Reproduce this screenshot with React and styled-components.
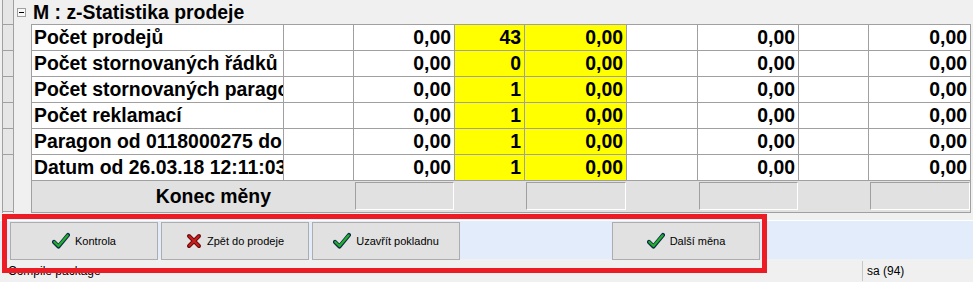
import { Fragment } from "react";
import styled, { createGlobalStyle } from "styled-components";

const GlobalStyle = createGlobalStyle`
  html, body {
    margin: 0;
    padding: 0;
    background: #f0f0f0;
    overflow: hidden;
  }
`;

const COLS = "252px 70px 101px 70px 102px 71px 101px 70px 102px";

const Shell = styled.div`
  position: relative;
  display: flex;
  flex-direction: column;
  width: 973px;
  height: 282px;
  background: #f0f0f0;
  overflow: hidden;
  font-family: "Liberation Sans", Arial, sans-serif;
  color: #000;
`;

const GridArea = styled.div`
  display: flex;
  height: 213px;
`;

const RowHeaders = styled.div`
  display: flex;
  flex-direction: column;
  width: 10px;
  margin-left: 2px;
  border-left: 1px solid #a0a0a0;
  border-right: 1px solid #a0a0a0;
`;

const HeaderCell = styled.div`
  height: ${({ $h }) => $h}px;
  box-sizing: border-box;
  background: #e6e6e6;
  border-bottom: 1px solid #a0a0a0;
`;

const Main = styled.div`
  flex: 1;
  display: flex;
  flex-direction: column;
`;

const TitleRow = styled.div`
  display: flex;
  align-items: center;
  height: 24px;
  padding-left: 3px;
  gap: 7px;
`;

const Toggle = styled.div`
  width: 9px;
  height: 9px;
  margin-top: 1px;
  box-sizing: border-box;
  border: 1px solid #a0a0a0;
  background: #f8f8f8;
  display: flex;
  align-items: center;
  justify-content: center;

  &::after {
    content: "";
    width: 5px;
    height: 1px;
    background: #000;
  }
`;

const Title = styled.div`
  font-size: 19.4px;
  font-weight: bold;
  white-space: nowrap;
`;

const Table = styled.div`
  margin-left: 17px;
  display: grid;
  grid-template-columns: ${COLS};
  width: 940px;
  box-sizing: border-box;
  border-top: 1px solid #a0a0a0;
  border-left: 1px solid #a0a0a0;
`;

const Cell = styled.div`
  height: 26px;
  box-sizing: border-box;
  border-right: 1px solid #a0a0a0;
  border-bottom: 1px solid #a0a0a0;
  background: ${({ $yellow }) => ($yellow ? "#ffff00" : "#ffffff")};
  font-size: 19.4px;
  font-weight: bold;
  line-height: 25px;
  white-space: nowrap;
  overflow: hidden;
  padding: ${({ $num }) => ($num ? "0 3px 0 0" : "0 0 0 2px")};
  text-align: ${({ $num }) => ($num ? "right" : "left")};
`;

const EndRow = styled.div`
  grid-column: 1 / -1;
  display: grid;
  grid-template-columns: ${COLS};
  height: 32px;
  box-sizing: border-box;
  background: #e1e1e1;
  border-right: 1px solid #a0a0a0;
  border-bottom: 1px solid #a0a0a0;
`;

const EndLabel = styled.div`
  font-size: 19.4px;
  font-weight: bold;
  line-height: 30px;
  text-align: right;
  padding-right: 13px;
`;

const EndBox = styled.div`
  margin: 1px 1px 2px 1px;
  box-sizing: border-box;
  border-top: 1px solid #a0a0a0;
  border-left: 1px solid #a0a0a0;
  border-bottom: 1px solid #ffffff;
  border-right: 1px solid #ffffff;
`;

const ButtonPanel = styled.div`
  display: flex;
  gap: 3px;
  margin-top: 7px;
  padding: 1px 0 0 10px;
  height: 39px;
  box-sizing: border-box;
  border-top: 1px solid #ffffff;
  background: #e2ecfa;
`;

const Button = styled.div`
  display: flex;
  align-items: center;
  justify-content: center;
  gap: 5px;
  width: 148px;
  height: 38px;
  margin-left: ${({ $push }) => $push || 0}px;
  box-sizing: border-box;
  background: #e1e1e1;
  border: 1px solid #adadad;
  font-size: 11px;
  white-space: nowrap;
`;

const StatusBar = styled.div`
  display: flex;
  align-items: center;
  margin-top: 2px;
  height: 20px;
  font-size: 12px;
  color: #000;
`;

const StatusMain = styled.div`
  flex: 1;
  padding-left: 8px;
`;

const StatusPane = styled.div`
  width: 106px;
  height: 100%;
  display: flex;
  align-items: center;
  padding-left: 4px;
  border-left: 1px solid #c8c8c8;
`;

const Highlight = styled.div`
  position: absolute;
  left: 2px;
  top: 214px;
  width: 765px;
  height: 59px;
  box-sizing: border-box;
  border: 5px solid #ed1c24;
  pointer-events: none;
`;

const CheckIcon = () => (
  <svg width="18" height="18" viewBox="0 0 18 18">
    <path d="M2 10 L6.5 14.5 L16 3" fill="none" stroke="#0d2a4a" strokeWidth="4.2" strokeLinecap="round" strokeLinejoin="round" />
    <path d="M2.3 10 L6.5 14 L15.7 3.3" fill="none" stroke="#22b02a" strokeWidth="2.2" strokeLinecap="round" strokeLinejoin="round" />
  </svg>
);

const CrossIcon = () => (
  <svg width="16" height="16" viewBox="0 0 16 16">
    <path d="M3 3 L13 13 M13 3 L3 13" fill="none" stroke="#6e0a0a" strokeWidth="4" strokeLinecap="round" />
    <path d="M3.3 3.3 L12.7 12.7 M12.7 3.3 L3.3 12.7" fill="none" stroke="#c81e1e" strokeWidth="2" strokeLinecap="round" />
  </svg>
);

const rows = [
  { label: "Počet prodejů", count: "43" },
  { label: "Počet stornovaných řádků", count: "0" },
  { label: "Počet stornovaných paragonů", count: "1" },
  { label: "Počet reklamací", count: "1" },
  { label: "Paragon od 0118000275 do 0118000276", count: "1" },
  { label: "Datum od 26.03.18 12:11:03", count: "1" },
];

export default function App() {
  return (
    <Shell>
      <GlobalStyle />
      <GridArea>
        <RowHeaders>
          <HeaderCell $h={25} />
          {[0, 1, 2, 3, 4].map((i) => (
            <HeaderCell key={i} $h={26} />
          ))}
          <HeaderCell $h={57} />
        </RowHeaders>
        <Main>
          <TitleRow>
            <Toggle />
            <Title>M : z-Statistika prodeje</Title>
          </TitleRow>
          <Table>
            {rows.map((r) => (
              <Fragment key={r.label}>
                <Cell>{r.label}</Cell>
                <Cell />
                <Cell $num>0,00</Cell>
                <Cell $num $yellow>{r.count}</Cell>
                <Cell $num $yellow>0,00</Cell>
                <Cell />
                <Cell $num>0,00</Cell>
                <Cell />
                <Cell $num>0,00</Cell>
              </Fragment>
            ))}
            <EndRow>
              <EndLabel>Konec měny</EndLabel>
              <div />
              <EndBox />
              <div />
              <EndBox />
              <div />
              <EndBox />
              <div />
              <EndBox />
            </EndRow>
          </Table>
        </Main>
      </GridArea>
      <ButtonPanel>
        <Button>
          <CheckIcon />
          Kontrola
        </Button>
        <Button>
          <CrossIcon />
          Zpět do prodeje
        </Button>
        <Button>
          <CheckIcon />
          Uzavřít pokladnu
        </Button>
        <Button $push={149}>
          <CheckIcon />
          Další měna
        </Button>
      </ButtonPanel>
      <StatusBar>
        <StatusMain>Compile package</StatusMain>
        <StatusPane>sa (94)</StatusPane>
      </StatusBar>
      <Highlight />
    </Shell>
  );
}
